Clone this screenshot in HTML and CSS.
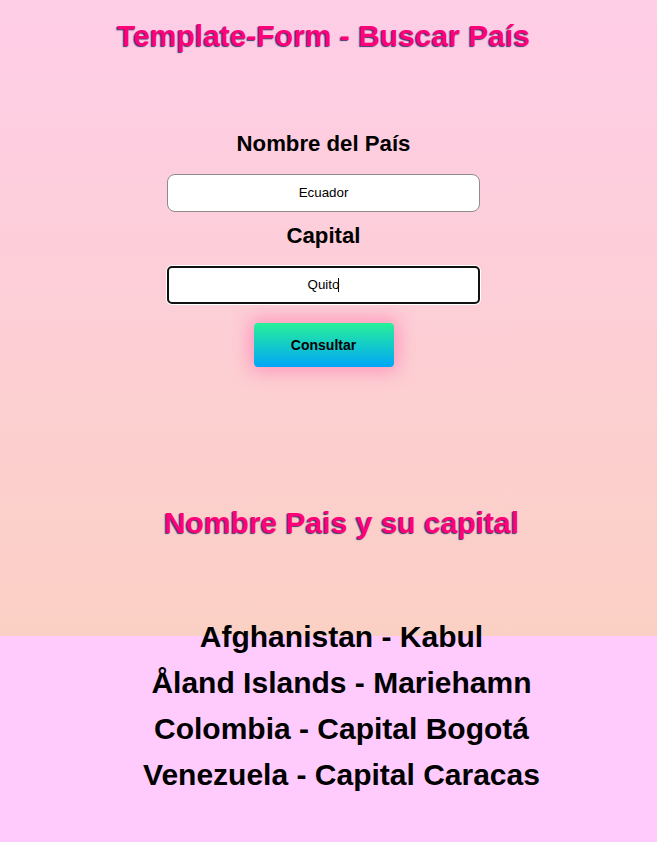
FILE: index.html
```html
<!DOCTYPE html>
<html lang="es">
<head>
<meta charset="utf-8">
<title>Template-Form - Buscar País</title>
<link rel="stylesheet" href="styles.css">
</head>
<body>
  <section class="top">
    <h1 class="title">Template-Form - Buscar País</h1>
    <form class="form">
      <label class="label label-first" for="pais">Nombre del País</label>
      <input class="field" id="pais" type="text" value="Ecuador">
      <label class="label label-second" for="capital">Capital</label>
      <div class="focus-wrap">
        <input class="field field-focused" id="capital" type="text" value="Quito">
        <span class="caret"></span>
      </div>
      <button class="btn" type="button">Consultar</button>
    </form>
  </section>
  <section class="results">
    <h2 class="subtitle">Nombre Pais y su capital</h2>
    <ul class="list">
      <li class="item">Afghanistan - Kabul</li>
      <li class="item">Åland Islands - Mariehamn</li>
      <li class="item">Colombia - Capital Bogotá</li>
      <li class="item">Venezuela - Capital Caracas</li>
    </ul>
  </section>
</body>
</html>
```
FILE: styles.css
```css
html, body {
  margin: 0;
  padding: 0;
}
body {
  min-height: 842px;
  font-family: "Liberation Sans", Arial, sans-serif;
  color: #000;
  background: linear-gradient(to bottom, #fecde7 0%, #fbd0c4 100%) no-repeat top left / 100% 636px, #fecbfc;
}
.top {
  display: flex;
  flex-direction: column;
  align-items: center;
  padding-right: 10px;
}
.title {
  margin: 19px 0 0;
  font-size: 30px;
  line-height: 34.5px;
  font-weight: bold;
  color: #ff0278;
  text-shadow: -1px 1px 1px rgba(40, 30, 90, 0.85);
}
.form {
  display: flex;
  flex-direction: column;
  align-items: center;
}
.label {
  font-size: 22.2px;
  line-height: 25px;
  font-weight: bold;
}
.label-first { margin-top: 77.5px; }
.label-second { margin-top: 11px; }
.field {
  box-sizing: border-box;
  width: 313px;
  height: 38px;
  margin: 18px 0 0;
  padding: 0 8px 2px;
  border: 1px solid #8c8c8c;
  border-radius: 8px;
  background: #fff;
  font-family: "Liberation Sans", Arial, sans-serif;
  font-size: 13.33px;
  color: #000;
  text-align: center;
  outline: none;
}
.focus-wrap {
  position: relative;
  margin-top: 18px;
}
.field-focused {
  margin: 0;
  border: 2px solid #111;
  border-radius: 5px;
  box-shadow: 0 0 0 1px #fff;
  display: block;
}
.caret {
  position: absolute;
  left: 171px;
  top: 12px;
  width: 1px;
  height: 14px;
  background: #000;
}
.btn {
  margin-top: 19px;
  width: 140px;
  height: 44px;
  border: none;
  border-radius: 4px;
  background: linear-gradient(to bottom, #28f098 0%, #00a6f8 100%);
  box-shadow: 0 0 18px 4px rgba(255, 130, 180, 0.75);
  font-family: "Liberation Sans", Arial, sans-serif;
  font-size: 14px;
  font-weight: bold;
  color: #000;
  cursor: pointer;
}
.results {
  display: flex;
  flex-direction: column;
  align-items: center;
  padding-left: 26px;
}
.subtitle {
  margin: 138.5px 0 0;
  font-size: 30px;
  line-height: 34.5px;
  font-weight: bold;
  color: #ff0278;
  text-shadow: -1px 1px 1px rgba(40, 30, 90, 0.85);
}
.list {
  list-style: none;
  margin: 73.6px 0 0;
  padding: 0;
  text-align: center;
}
.item {
  font-size: 30px;
  line-height: 46px;
  font-weight: bold;
}
```
